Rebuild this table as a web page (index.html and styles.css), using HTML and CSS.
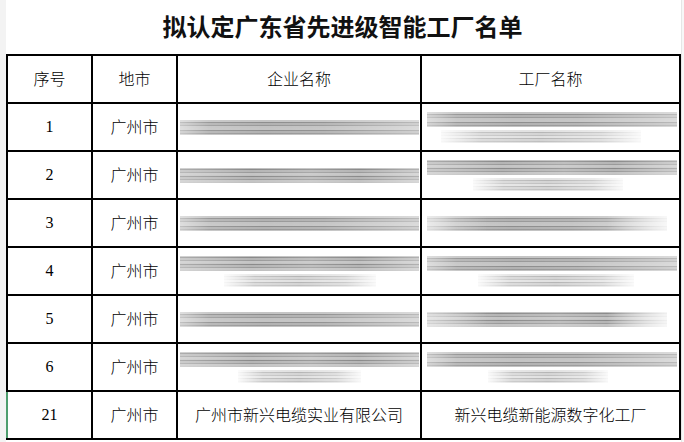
FILE: index.html
```html
<!DOCTYPE html>
<html lang="zh-CN">
<head>
<meta charset="utf-8">
<title>拟认定广东省先进级智能工厂名单</title>
<link rel="stylesheet" href="styles.css">
</head>
<body>
<div class="page">
  <div class="gutter"></div>
  <main class="sheet">
    <h1 class="title">拟认定广东省先进级智能工厂名单</h1>
    <table class="list">
      <colgroup>
        <col class="c-no"><col class="c-city"><col class="c-corp"><col class="c-fac">
      </colgroup>
      <thead>
        <tr><th>序号</th><th>地市</th><th>企业名称</th><th>工厂名称</th></tr>
      </thead>
      <tbody>
        <tr>
          <td class="num">1</td><td>广州市</td>
          <td class="blur"><div class="bar corp"></div></td>
          <td class="blur"><div class="bar fac"></div><div class="bar sub f1"></div></td>
        </tr>
        <tr>
          <td class="num">2</td><td>广州市</td>
          <td class="blur"><div class="bar corp v2"></div></td>
          <td class="blur"><div class="bar fac v2"></div><div class="bar sub f2"></div></td>
        </tr>
        <tr>
          <td class="num">3</td><td>广州市</td>
          <td class="blur"><div class="bar corp"></div></td>
          <td class="blur"><div class="bar fac fade"></div></td>
        </tr>
        <tr>
          <td class="num">4</td><td>广州市</td>
          <td class="blur"><div class="bar corp v2"></div><div class="bar sub c4"></div></td>
          <td class="blur"><div class="bar fac"></div><div class="bar sub f4"></div></td>
        </tr>
        <tr>
          <td class="num">5</td><td>广州市</td>
          <td class="blur"><div class="bar corp"></div></td>
          <td class="blur"><div class="bar fac fade v2"></div></td>
        </tr>
        <tr>
          <td class="num">6</td><td>广州市</td>
          <td class="blur"><div class="bar corp v2"></div><div class="bar sub c6"></div></td>
          <td class="blur"><div class="bar fac"></div><div class="bar sub f6"></div></td>
        </tr>
        <tr class="selected">
          <td class="num">21</td><td>广州市</td>
          <td>广州市新兴电缆实业有限公司</td>
          <td>新兴电缆新能源数字化工厂</td>
        </tr>
      </tbody>
    </table>
  </main>
  <div class="gutter right"></div>
</div>
</body>
</html>
```

FILE: styles.css
```css
html, body {
  margin: 0;
  padding: 0;
  background: #ffffff;
}

.page {
  display: flex;
  width: 684px;
  height: 442px;
  overflow: hidden;
}

.gutter {
  width: 6px;
  flex: none;
  background: #f3f3f3;
}

.gutter.right {
  width: 4px;
  background: #f7f7f7;
  border-left: 1px solid #e6e6e6;
}

.sheet {
  flex: 1;
  display: flex;
  flex-direction: column;
}

.title {
  margin: 0;
  height: 54px;
  display: flex;
  align-items: center;
  justify-content: center;
  padding-right: 2px;
  padding-bottom: 3px;
  box-sizing: border-box;
  font-family: "Noto Sans CJK SC", "Noto Sans", sans-serif;
  font-weight: 700;
  font-size: 24px;
  color: #111;
}

.list {
  border-collapse: collapse;
  table-layout: fixed;
  width: 673px;
  font-family: "Noto Sans CJK SC", "Noto Sans", sans-serif;
  font-size: 16px;
  font-weight: 300;
  color: #000;
}

.c-no { width: 85px; }
.c-city { width: 85px; }
.c-corp { width: 244px; }
.c-fac { width: 259px; }

.list th,
.list td {
  border: 2px solid #000;
  height: 46px;
  padding: 0;
  text-align: center;
  vertical-align: middle;
  font-weight: 300;
  line-height: 1.2;
}

.list td.num {
  font-family: "Liberation Serif", "Times New Roman", serif;
  font-weight: 400;
  font-size: 16px;
}

.list tr.selected td:first-child {
  border-left-color: #4e9e6e;
}

.list td.blur {
  padding: 0 2px;
  text-align: left;
}

.bar {
  height: 15px;
  background-image:
    linear-gradient(90deg, rgba(255,255,255,0.45) 0%, rgba(255,255,255,0.1) 12%, rgba(255,255,255,0) 35%, rgba(255,255,255,0.05) 60%, rgba(255,255,255,0.3) 90%, rgba(255,255,255,0.4) 100%),
    repeating-linear-gradient(180deg, #c4c4c4 0 2px, #8e8e8e 2px 3px, #b2b2b2 3px 5px, #999999 5px 6px, #c2c2c2 6px 8px);
  filter: blur(0.5px);
}

.bar.v2 {
  background-image:
    linear-gradient(90deg, rgba(255,255,255,0.3) 0%, rgba(255,255,255,0) 30%, rgba(255,255,255,0.15) 55%, rgba(255,255,255,0) 75%, rgba(255,255,255,0.35) 100%),
    repeating-linear-gradient(180deg, #bfbfbf 0 1px, #8a8a8a 1px 2px, #b5b5b5 2px 4px, #9a9a9a 4px 5px, #c4c4c4 5px 7px);
}

.bar.corp { width: 239px; }
.bar.fac { width: 250px; margin-left: 3px; }

.bar.fade {
  width: 240px;
  -webkit-mask-image: linear-gradient(90deg, rgba(0,0,0,0.6), #000 25%, #000 75%, rgba(0,0,0,0.2));
  mask-image: linear-gradient(90deg, rgba(0,0,0,0.6), #000 25%, #000 75%, rgba(0,0,0,0.2));
}

.bar.sub {
  height: 13px;
  margin-top: 3px;
  opacity: 0.8;
  background-image:
    linear-gradient(90deg, rgba(255,255,255,0.9) 0%, rgba(255,255,255,0.2) 20%, rgba(255,255,255,0) 50%, rgba(255,255,255,0.3) 80%, rgba(255,255,255,0.9) 100%),
    repeating-linear-gradient(180deg, #dadada 0 2px, #a4a4a4 2px 3px, #cacaca 3px 5px, #b0b0b0 5px 6px);
}

.bar.f1 { width: 200px; margin-left: 17px; }
.bar.f2 { width: 150px; margin-left: 49px; }
.bar.f4 { width: 156px; margin-left: 54px; }
.bar.f6 { width: 120px; margin-left: 64px; }
.bar.c4 { width: 152px; margin-left: 44px; }
.bar.c6 { width: 123px; margin-left: 58px; }
```
